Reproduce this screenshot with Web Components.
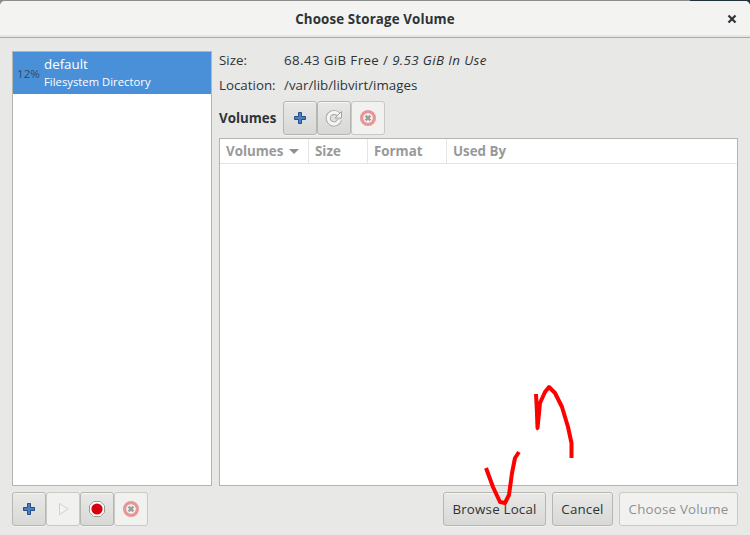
<!DOCTYPE html>
<html>
<head>
<meta charset="utf-8">
<style>
  html, body { margin: 0; padding: 0; }
  body { width: 750px; height: 535px; overflow: hidden; background: linear-gradient(90deg, #8b8b89 690px, #1f3238 690px); font-family: "Open Sans", sans-serif; }
</style>
</head>
<body>
<storage-dialog heading="Choose Storage Volume">
  <pool-list slot="pools">
    <pool-row percent="12%" name="default" kind="Filesystem Directory"></pool-row>
  </pool-list>
  <tool-button slot="pool-tools" icon="add"></tool-button>
  <tool-button slot="pool-tools" icon="play" disabled></tool-button>
  <tool-button slot="pool-tools" icon="record"></tool-button>
  <tool-button slot="pool-tools" icon="delete" disabled></tool-button>
  <volume-panel slot="detail" free="68.43 GiB Free" used="9.53 GiB In Use" location="/var/lib/libvirt/images">
    <tool-button slot="tools" icon="add"></tool-button>
    <tool-button slot="tools" icon="refresh"></tool-button>
    <tool-button slot="tools" icon="delete" disabled></tool-button>
  </volume-panel>
  <text-button slot="actions" style="width:103px">Browse Local</text-button>
  <text-button slot="actions" style="width:61px">Cancel</text-button>
  <text-button slot="actions" style="width:119px" disabled>Choose Volume</text-button>
</storage-dialog>
<script>
(() => {
  const icons = {
    add: `<svg width="16" height="16" viewBox="0 0 16 16"><path d="M6.500 2.500h3v4h4v3h-4v4h-3v-4h-4v-3h4z" fill="#4a7fc0" stroke="#274f86" stroke-linejoin="round"/></svg>`,
    play: `<svg width="16" height="16" viewBox="0 0 16 16"><path d="M4.500 2.500l8.500 5.500-8.500 5.500z" fill="#f4f4f3" stroke="#d0d2cf"/></svg>`,
    record: `<svg width="18" height="18" viewBox="0 0 18 18"><path d="M5.700 1.500h6.600l4.200 4.200v6.600l-4.200 4.200H5.700l-4.200-4.200V5.700z" fill="#fff" stroke="#9a9a98"/><circle cx="9" cy="9" r="5.600" fill="#d8000c"/></svg>`,
    refresh: `<svg width="18" height="18" viewBox="0 0 18 18"><path d="M13.200 5.200A5.800 5.800 0 1 0 14.600 10.800" fill="none" stroke="#a3a4a0" stroke-width="5"/><path d="M13.200 5.200A5.800 5.800 0 1 0 14.600 10.800" fill="none" stroke="#f5f5f3" stroke-width="3.200"/><path d="M16.500 2.500v6.500h-6.500z" fill="#f5f5f3" stroke="#a3a4a0" stroke-linejoin="round"/></svg>`,
    delete: `<svg width="18" height="18" viewBox="0 0 18 18"><circle cx="9" cy="9" r="6.400" fill="#f4f4f3" stroke="#e99595" stroke-width="3.200"/><path d="M6.600 6.600l4.800 4.800M11.400 6.600l-4.800 4.800" stroke="#9d9d9b" stroke-width="2.400"/></svg>`
  }

  class ToolButton extends HTMLElement {
    constructor() {
      super()
      this.attachShadow({ mode: 'open' }).innerHTML = `
        <style>
          :host { width: 34px; height: 34px; box-sizing: border-box; border: 1px solid #b6b6b3; border-radius: 3px;
            background: linear-gradient(#e8e8e7, #d8d8d6); box-shadow: inset 0 1px #f6f6f5, 0 1px #f2f2f1; display: flex; align-items: center; justify-content: center; }
          :host([disabled]) { background: #f1f1f0; box-shadow: none; border-color: #c9c9c6; }
          svg { display: block; }
        </style>
        ${icons[this.getAttribute('icon')]}`
    }
  }

  class TextButton extends HTMLElement {
    constructor() {
      super()
      this.attachShadow({ mode: 'open' }).innerHTML = `
        <style>
          :host { display: flex; height: 34px; box-sizing: border-box; align-items: center; justify-content: center; font-size: 13.33px; letter-spacing: .2px; color: #2e3436;
            border: 1px solid #b6b6b3; border-radius: 3px; background: linear-gradient(#e8e8e7, #d8d8d6); box-shadow: inset 0 1px #f6f6f5, 0 1px #f2f2f1; }
          :host([disabled]) { color: #8f9190; background: #f1f1f0; box-shadow: none; border-color: #c9c9c6; }
        </style>
        <slot></slot>`
    }
  }

  class PoolRow extends HTMLElement {
    constructor() {
      super()
      this.attachShadow({ mode: 'open' }).innerHTML = `
        <style>
          :host { display: flex; height: 42px; background: #4a90d9; color: #fff; align-items: center; }
          .pct { width: 31px; padding-left: 4px; box-sizing: border-box; font-size: 11.6px; color: #34495c; margin-top: 1px; }
          .name { font-size: 13.33px; line-height: 16px; margin-top: -1px; }
          .kind { font-size: 11.2px; line-height: 15px; margin-top: 2px; letter-spacing: .05px; }
        </style>
        <div class="pct">${this.getAttribute('percent')}</div>
        <div><div class="name">${this.getAttribute('name')}</div><div class="kind">${this.getAttribute('kind')}</div></div>`
    }
  }

  class PoolList extends HTMLElement {
    constructor() {
      super()
      this.attachShadow({ mode: 'open' }).innerHTML = `
        <style>
          :host { display: block; flex: 1; background: #fff; border: 1px solid #b3b5b0; }
        </style>
        <slot></slot>`
    }
  }

  class VolumePanel extends HTMLElement {
    constructor() {
      super()
      this.attachShadow({ mode: 'open' }).innerHTML = `
        <style>
          :host { display: flex; flex-direction: column; flex: 1; min-height: 0; font-size: 13.33px; color: #2e3436; }
          .info { display: grid; grid-template-columns: 65px 1fr; row-gap: 9px; line-height: 16px; padding-top: 1px; }
          .wide { letter-spacing: .38px; }
          .bar { display: flex; align-items: center; margin-top: 8px; height: 34px; }
          .bar b { width: 64px; }
          .tools { display: flex; }
          .table { flex: 1; margin-top: 3px; background: #fff; border: 1px solid #b3b5b0; }
          .head { display: grid; grid-template-columns: 89px 59px 79px 1fr; height: 24px; border-bottom: 1px solid #e4e4e3; color: #989a99; font-weight: bold; }
          .head div { display: flex; align-items: center; padding-left: 6px; border-right: 1px solid #e4e4e3; }
          .head div:last-child { border-right: 0; }
          .arrow { width: 0; height: 0; border: 5px solid transparent; border-top: 5px solid #8f9190; border-bottom: 0; margin-left: 6px; }
        </style>
        <div class="info">
          <div>Size:</div><div class="wide">${this.getAttribute('free')} / <i>${this.getAttribute('used')}</i></div>
          <div>Location:</div><div>${this.getAttribute('location')}</div>
        </div>
        <div class="bar"><b>Volumes</b><div class="tools"><slot name="tools"></slot></div></div>
        <div class="table">
          <div class="head"><div>Volumes<span class="arrow"></span></div><div>Size</div><div>Format</div><div>Used By</div></div>
        </div>`
    }
  }

  class StorageDialog extends HTMLElement {
    constructor() {
      super()
      this.attachShadow({ mode: 'open' }).innerHTML = `
        <style>
          :host { display: flex; flex-direction: column; width: 750px; height: 534px; background: #e8e8e7; border-radius: 5px 5px 0 0; margin-top: 1px; overflow: hidden; }
          .title { position: relative; flex: none; height: 36px; background: #f3f3f2; border-bottom: 1px solid #a8a8a5; display: flex; align-items: center; justify-content: center;
            font-weight: bold; font-size: 13.33px; letter-spacing: .14px; color: #2e3436; box-shadow: inset 0 -2px #e6e6e5; }
          .close { position: absolute; right: 12px; top: 12px; }
          .body { flex: 1; min-height: 0; display: flex; gap: 7px; padding: 13px 12px 0 12px; }
          .left { width: 200px; flex: none; display: flex; }
          .right { flex: 1; display: flex; min-width: 0; }
          .foot { flex: none; height: 49px; box-sizing: border-box; display: flex; justify-content: space-between; align-items: flex-start; padding: 6px 12px 0 12px; }
          .tools, .actions { display: flex; }
          .actions { gap: 6px; }
        </style>
        <div class="title">${this.getAttribute('heading')}
          <svg class="close" width="12" height="12" viewBox="0 0 12 12"><path d="M2.500 2.500l7 7M9.500 2.500l-7 7" stroke="#2e3436" stroke-width="2.200"/></svg>
        </div>
        <div class="body">
          <div class="left"><slot name="pools"></slot></div>
          <div class="right"><slot name="detail"></slot></div>
        </div>
        <div class="foot">
          <div class="tools"><slot name="pool-tools"></slot></div>
          <div class="actions"><slot name="actions"></slot></div>
        </div>
        <svg style="position:absolute;left:0;top:0;pointer-events:none" width="750" height="535" viewBox="0 0 750 535">
          <path d="M486 468L493 487 500 502 505 503 509 495 512 473 515 458 519 452" fill="none" stroke="#ff0000" stroke-width="4" stroke-linejoin="round"/>
          <path d="M536 394L537 413 537.500 428 540 403 545 392 549 387 555 393 562 407 568 427 571.500 443 571.500 458" fill="none" stroke="#ff0000" stroke-width="4" stroke-linejoin="round"/>
          <path d="M535 410L541 410 537 432z" fill="#ff0000"/>
        </svg>`
    }
  }

  customElements.define('tool-button', ToolButton)
  customElements.define('text-button', TextButton)
  customElements.define('pool-row', PoolRow)
  customElements.define('pool-list', PoolList)
  customElements.define('volume-panel', VolumePanel)
  customElements.define('storage-dialog', StorageDialog)
})()
</script>
</body>
</html>
